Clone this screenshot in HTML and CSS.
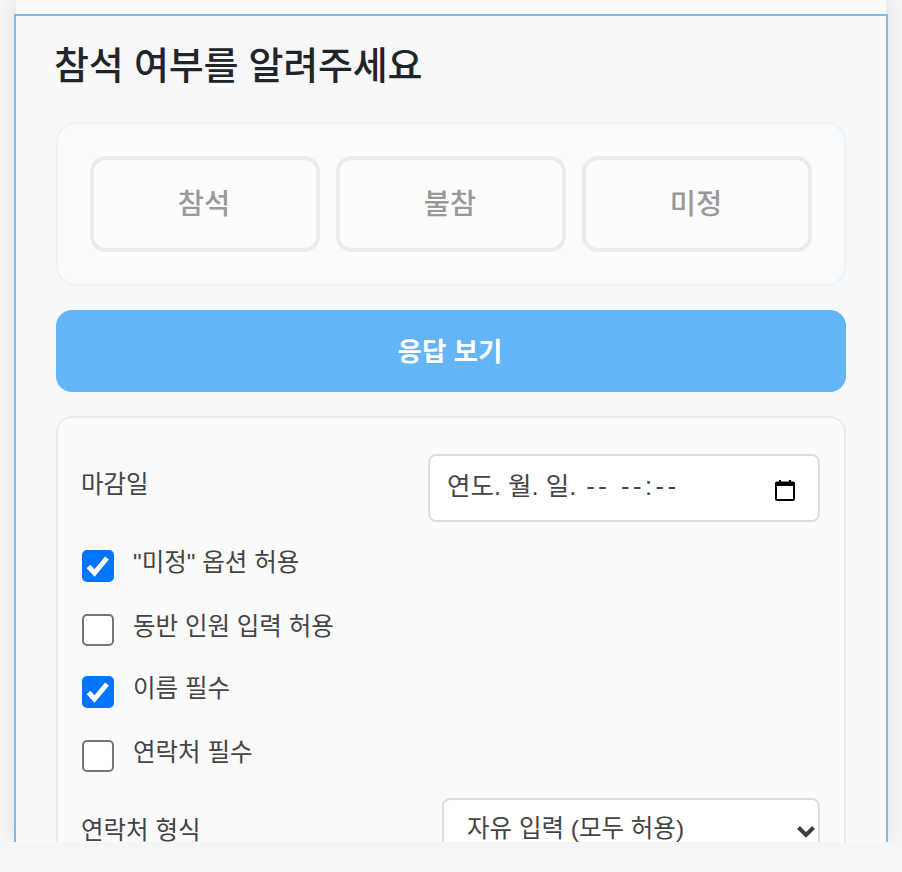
FILE: index.html
```html
<!DOCTYPE html>
<html lang="ko">
<head>
    <meta charset="UTF-8">
    <meta name="viewport" content="width=device-width, initial-scale=1.0">
    <title>참석 여부</title>
    <link rel="stylesheet" href="styles.css">
</head>
<body>
    <div class="frame">
        <div class="container">
            <div class="section">
                <h2>참석 여부를 알려주세요</h2>

                <!-- Attendance buttons -->
                <div class="rsvp-card">
                    <button class="rsvp-btn">참석</button>
                    <button class="rsvp-btn">불참</button>
                    <button class="rsvp-btn">미정</button>
                </div>

                <button class="view-btn">응답 보기</button>

                <!-- Settings -->
                <div class="settings">
                    <div class="row date-row">
                        <span class="label">마감일</span>
                        <div class="date-input">
                            <span>연도. 월. 일. <span class="dashes">-- --:--</span></span>
                            <svg class="cal-icon" width="24" height="24" viewBox="0 0 24 24">
                                <path d="M6 2h2v3H6zM16 2h2v3h-2z"/>
                                <path fill-rule="evenodd" d="M4 3.500h16a2 2 0 0 1 2 2V21a2 2 0 0 1-2 2H4a2 2 0 0 1-2-2V5.500a2 2 0 0 1 2-2zM4 8v13h16V8z"/>
                            </svg>
                        </div>
                    </div>

                    <label class="check"><input type="checkbox" checked><span>"미정" 옵션 허용</span></label>
                    <label class="check"><input type="checkbox"><span>동반 인원 입력 허용</span></label>
                    <label class="check"><input type="checkbox" checked><span>이름 필수</span></label>
                    <label class="check"><input type="checkbox"><span>연락처 필수</span></label>

                    <div class="row select-row">
                        <span class="label">연락처 형식</span>
                        <div class="select-wrap">
                            <select>
                                <option>자유 입력 (모두 허용)</option>
                            </select>
                            <svg class="chevron" width="20" height="14" viewBox="0 0 20 14">
                                <path d="M2.500 3.500 10 11 17.500 3.500" fill="none" stroke="#3d3d3d" stroke-width="4"/>
                            </svg>
                        </div>
                    </div>
                </div>
            </div>
        </div>
    </div>
</body>
</html>
```

FILE: styles.css
```css
* {
    margin: 0;
    padding: 0;
    box-sizing: border-box;
    font-family: "Liberation Sans", "Noto Sans CJK KR", sans-serif;
}

html, body {
    height: 872px;
    overflow: hidden;
}

body {
    background-color: #f5f5f5;
}

.frame {
    height: 842px;
    overflow: hidden;
    padding: 0 16px;
}

.container {
    background: #f8f9f9;
    height: 842px;
    padding-top: 14px;
    box-shadow: 0 0 20px rgba(0, 0, 0, 0.1);
}

.section {
    margin: 0 -2px;
    height: 900px;
    background: #f6f8fa;
    border: 2px solid #7dbbec;
    padding: 0 40px;
}

.section h2 {
    font-size: 38px;
    font-weight: 500;
    letter-spacing: -0.2px;
    margin-left: -2px;
    color: #212529;
    line-height: 54px;
    padding-top: 23px;
    margin-bottom: 29px;
}

.rsvp-card {
    display: flex;
    gap: 16px;
    padding: 32px;
    background: #f9fbfd;
    border: 2px solid #edf3f8;
    border-radius: 20px;
}

.rsvp-btn {
    flex: 1;
    height: 96px;
    padding: 0 2px 5px 0;
    background: #fcfcfd;
    border: 4px solid #e9ebec;
    border-radius: 16px;
    font-size: 28.500px;
    font-weight: 500;
    color: #999;
}

.view-btn {
    display: block;
    width: 100%;
    height: 82px;
    padding: 0 2px 4px 0;
    margin-top: 24px;
    background: #64b5f6;
    border: none;
    border-radius: 16px;
    font-size: 26.500px;
    font-weight: 700;
    color: #fff;
}

.settings {
    margin-top: 24px;
    padding: 36px 24px 0;
    background: #fafafa;
    border: 2px solid #e9e9e9;
    border-radius: 16px;
    height: 500px;
}

.row {
    display: flex;
    justify-content: space-between;
}

.label {
    font-size: 24.500px;
    line-height: 38px;
    margin-left: -1px;
    color: #444;
}

.date-row {
    margin-bottom: 28px;
}

.date-row .label {
    padding-top: 12px;
}

.date-input {
    display: flex;
    align-items: center;
    justify-content: space-between;
    width: 392px;
    height: 68px;
    padding: 0 21px 0 17px;
    background: #fff;
    border: 2px solid #ddd;
    border-radius: 8px;
    font-size: 25.500px;
    color: #444;
}

.date-input > span {
    margin-top: -10px;
}

.dashes {
    margin-left: 3px;
    letter-spacing: 3.500px;
}

.cal-icon {
    margin-top: 4px;
}

.check {
    display: flex;
    gap: 19px;
    height: 32px;
    margin-bottom: 32px;
    font-size: 24.500px;
    line-height: 26px;
    color: #444;
}

.check:nth-of-type(2) {
    margin-bottom: 30px;
}

.check input {
    appearance: none;
    width: 32px;
    height: 32px;
    flex-shrink: 0;
    background: #fff;
    border: 2px solid #767676;
    border-radius: 5px;
}

.check input:checked {
    border-color: #0075ff;
    background: #0075ff url("data:image/svg+xml,%3Csvg xmlns='http://www.w3.org/2000/svg' viewBox='0 0 28 28'%3E%3Cpath d='M4.500 14.500 10.500 21 23 6' fill='none' stroke='%23fff' stroke-width='5'/%3E%3C/svg%3E") center / 28px 28px no-repeat;
}

.select-row {
    margin-top: -6px;
}

.select-row .label {
    padding-top: 14px;
}

.select-wrap {
    position: relative;
}

.select-wrap select {
    display: block;
    width: 378px;
    height: 68px;
    padding: 0 23px 8px;
    appearance: none;
    background: #fff;
    border: 2px solid #ddd;
    border-radius: 8px;
    font-size: 24.500px;
    color: #444;
}

.chevron {
    position: absolute;
    right: 4px;
    top: 26px;
}
```
